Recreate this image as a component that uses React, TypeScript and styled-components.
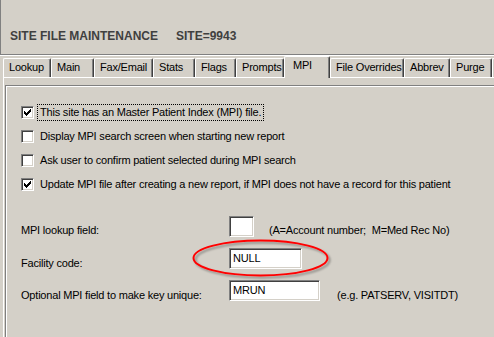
import React from "react";
import styled, { createGlobalStyle } from "styled-components";

const Global = createGlobalStyle`
  html, body { margin: 0; padding: 0; background: #d4d0c8; }
  body { font-family: "Liberation Sans", Arial, sans-serif; font-size: 11px; letter-spacing: -0.2px; color: #000; }
`;

const Window = styled.div`
  position: relative;
  width: 494px;
  height: 337px;
  overflow: hidden;
  background: #d4d0c8;
  display: flex;
  flex-direction: column;
`;

const Header = styled.div`
  height: 54px;
  box-sizing: border-box;
  border-left: 1px solid #808080;
  padding: 29px 0 0 9px;
  display: flex;
  gap: 18px;
`;

const Title = styled.span`
  font-weight: bold;
  font-size: 12px;
  line-height: 14px;
  letter-spacing: 0;
  color: #404040;
  white-space: nowrap;
`;

const Rule = styled.div`
  border-top: 1px solid #808080;
  border-bottom: 1px solid #fff;
`;

const TabStrip = styled.div`
  display: flex;
  align-items: flex-end;
  height: 21px;
  padding-left: 3px;
  position: relative;
  z-index: 1;
`;

const Tab = styled.div<{ $w: number; $active?: boolean }>`
  box-sizing: border-box;
  flex: none;
  width: ${(p) => p.$w}px;
  height: ${(p) => (p.$active ? 22 : 19)}px;
  margin-bottom: ${(p) => (p.$active ? -1 : 0)}px;
  background: #d4d0c8;
  border-top: 1px solid #fff;
  border-left: 1px solid #fff;
  border-right: 1px solid #404040;
  box-shadow: inset -1px 0 #808080;
  border-top-left-radius: 2px;
  border-top-right-radius: 2px;
  padding: 2px 0 0 ${(p) => (p.$active ? 8 : 5)}px;
  line-height: 13px;
  white-space: nowrap;
  overflow: hidden;
`;

const Panel = styled.div`
  flex: 1;
  margin-left: 3px;
  border-top: 1px solid #fff;
  border-left: 1px solid #fff;
  padding: 7px 0 0 1px;
  display: flex;
`;

const Frame = styled.div`
  flex: 1;
  box-sizing: border-box;
  border-top: 1px solid #808080;
  border-left: 1px solid #808080;
  box-shadow: inset 1px 1px #fff;
  padding: 14px 0 0 15px;
  display: flex;
  flex-direction: column;
`;

const CheckRow = styled.div`
  display: flex;
  align-items: center;
  height: 24px;
`;

const Box = styled.span`
  box-sizing: border-box;
  flex: none;
  width: 13px;
  height: 13px;
  background: #fff;
  border: 1px solid;
  border-color: #808080 #fff #fff #808080;
  box-shadow: inset 1px 1px #404040, inset -1px -1px #d4d0c8;
  display: flex;
  align-items: center;
  justify-content: center;
`;

const CheckLabel = styled.span<{ $focus?: boolean }>`
  margin-left: 3px;
  padding: 1px 2px;
  line-height: 13px;
  border: 1px dotted ${(p) => (p.$focus ? "#000" : "transparent")};
  white-space: nowrap;
`;

const Fields = styled.div`
  display: flex;
  flex-direction: column;
  margin-top: 20px;
`;

const FieldRow = styled.div<{ $mt: number }>`
  display: flex;
  align-items: flex-start;
  margin-top: ${(p) => p.$mt}px;
`;

const FieldLabel = styled.span<{ $dy: number }>`
  flex: none;
  width: 208px;
  margin-top: ${(p) => p.$dy}px;
  line-height: 13px;
  white-space: nowrap;
`;

const Input = styled.div<{ $w: number }>`
  box-sizing: border-box;
  flex: none;
  width: ${(p) => p.$w}px;
  height: 21px;
  background: #fff;
  border: 1px solid;
  border-color: #808080 #fff #fff #808080;
  box-shadow: inset 1px 1px #404040, inset -1px -1px #d4d0c8;
  padding: 2px 0 0 3px;
  line-height: 15px;
  white-space: nowrap;
`;

const Hint = styled.span<{ $gap: number; $dy: number }>`
  margin-left: ${(p) => p.$gap}px;
  margin-top: ${(p) => p.$dy}px;
  line-height: 13px;
  white-space: pre;
`;

const Highlight = styled.svg`
  position: absolute;
  left: 186px;
  top: 234px;
  pointer-events: none;
`;

const Check = () => (
  <svg width="7" height="7" viewBox="0 0 7 7" shapeRendering="crispEdges">
    <polygon
      fill="#000"
      points="0,2 1,2 1,3 2,3 2,4 3,4 3,3 4,3 4,2 5,2 5,1 6,1 6,0 7,0 7,3 6,3 6,4 5,4 5,5 4,5 4,6 3,6 3,7 2,7 2,6 1,6 1,5 0,5"
    />
  </svg>
);

const tabs = [
  { label: "Lookup", w: 48 },
  { label: "Main", w: 43 },
  { label: "Fax/Email", w: 59 },
  { label: "Stats", w: 42 },
  { label: "Flags", w: 41 },
  { label: "Prompts", w: 48 },
  { label: "MPI", w: 46, active: true },
  { label: "File Overrides", w: 74 },
  { label: "Abbrev", w: 46 },
  { label: "Purge", w: 42 },
  { label: "", w: 40 },
];

const checks = [
  { label: "This site has an Master Patient Index (MPI) file.", checked: true, focus: true },
  { label: "Display MPI search screen when starting new report", checked: false },
  { label: "Ask user to confirm patient selected during MPI search", checked: false },
  {
    label: "Update MPI file after creating a new report, if MPI does not have a record for this patient",
    checked: true,
  },
];

export default function App() {
  return (
    <>
      <Global />
      <Window>
        <Header>
          <Title>SITE FILE MAINTENANCE</Title>
          <Title>SITE=9943</Title>
        </Header>
        <Rule />
        <TabStrip>
          {tabs.map((t, i) => (
            <Tab key={i} $w={t.w} $active={t.active}>
              {t.label}
            </Tab>
          ))}
        </TabStrip>
        <Panel>
          <Frame>
            {checks.map((c) => (
              <CheckRow key={c.label}>
                <Box>{c.checked && <Check />}</Box>
                <CheckLabel $focus={c.focus}>{c.label}</CheckLabel>
              </CheckRow>
            ))}
            <Fields>
              <FieldRow $mt={0}>
                <FieldLabel $dy={8}>MPI lookup field:</FieldLabel>
                <Input $w={25} />
                <Hint $gap={15} $dy={8}>{"(A=Account number;  M=Med Rec No)"}</Hint>
              </FieldRow>
              <FieldRow $mt={11}>
                <FieldLabel $dy={9}>Facility code:</FieldLabel>
                <Input $w={73}>NULL</Input>
              </FieldRow>
              <FieldRow $mt={10}>
                <FieldLabel $dy={9}>Optional MPI field to make key unique:</FieldLabel>
                <Input $w={91}>MRUN</Input>
                <Hint $gap={17} $dy={9}>(e.g. PATSERV, VISITDT)</Hint>
              </FieldRow>
            </Fields>
          </Frame>
        </Panel>
        <Highlight width="150" height="50" viewBox="0 0 150 50">
          <defs>
            <filter id="shadow" x="-10%" y="-30%" width="120%" height="160%">
              <feDropShadow dx="2" dy="2" stdDeviation="1.2" floodColor="#000" floodOpacity="0.35" />
            </filter>
          </defs>
          <ellipse cx="74.5" cy="24" rx="67" ry="17.5" fill="none" stroke="#f00" strokeWidth="2" filter="url(#shadow)" />
        </Highlight>
      </Window>
    </>
  );
}
